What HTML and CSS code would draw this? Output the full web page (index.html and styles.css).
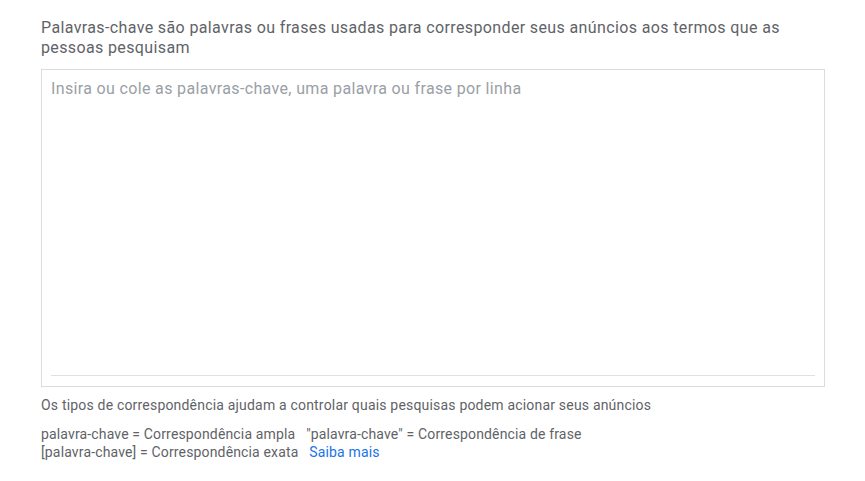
FILE: index.html
```html
<!DOCTYPE html>
<html lang="pt">
<head>
<meta charset="utf-8">
<link rel="stylesheet" href="styles.css">
</head>
<body>
<div class="panel">
  <p class="intro">Palavras-chave são palavras ou frases usadas para corresponder seus anúncios aos termos que as pessoas pesquisam</p>
  <div class="box">
    <div class="placeholder">Insira ou cole as palavras-chave, uma palavra ou frase por linha</div>
    <div class="underline"></div>
  </div>
  <p class="help">Os tipos de correspondência ajudam a controlar quais pesquisas podem acionar seus anúncios</p>
  <p class="types">palavra-chave = Correspondência ampla&nbsp;&nbsp; "palavra-chave" = Correspondência de frase<br>[palavra-chave] = Correspondência exata&nbsp;&nbsp; <a class="link" href="#">Saiba mais</a></p>
</div>
</body>
</html>
```
FILE: styles.css
```css
html, body {
  margin: 0;
  padding: 0;
  background: #ffffff;
}
body {
  font-family: Roboto, "Liberation Sans", Arial, sans-serif;
  color: #5f6368;
}
.panel {
  width: 784px;
  padding: 18px 0 0 41px;
}
.intro {
  margin: 0;
  width: 760px;
  font-size: 16px;
  line-height: 20px;
  letter-spacing: 0.37px;
  color: #5f6368;
}
.box {
  margin-top: 11px;
  height: 318px;
  border: 1px solid #dadce0;
  box-sizing: border-box;
  padding: 9px 9px 10px 9px;
  display: flex;
  flex-direction: column;
}
.placeholder {
  font-size: 16px;
  line-height: 20px;
  letter-spacing: 0.35px;
  color: #9aa0a6;
  flex: 1;
}
.underline {
  height: 1px;
  background: #e0e0e0;
}
.help {
  margin: 9px 0 0;
  font-size: 14px;
  line-height: 18px;
  letter-spacing: 0.19px;
}
.types {
  margin: 11px 0 0;
  font-size: 14px;
  line-height: 18px;
  letter-spacing: 0.15px;
}
.link {
  color: #1a73e8;
  text-decoration: none;
}
```
